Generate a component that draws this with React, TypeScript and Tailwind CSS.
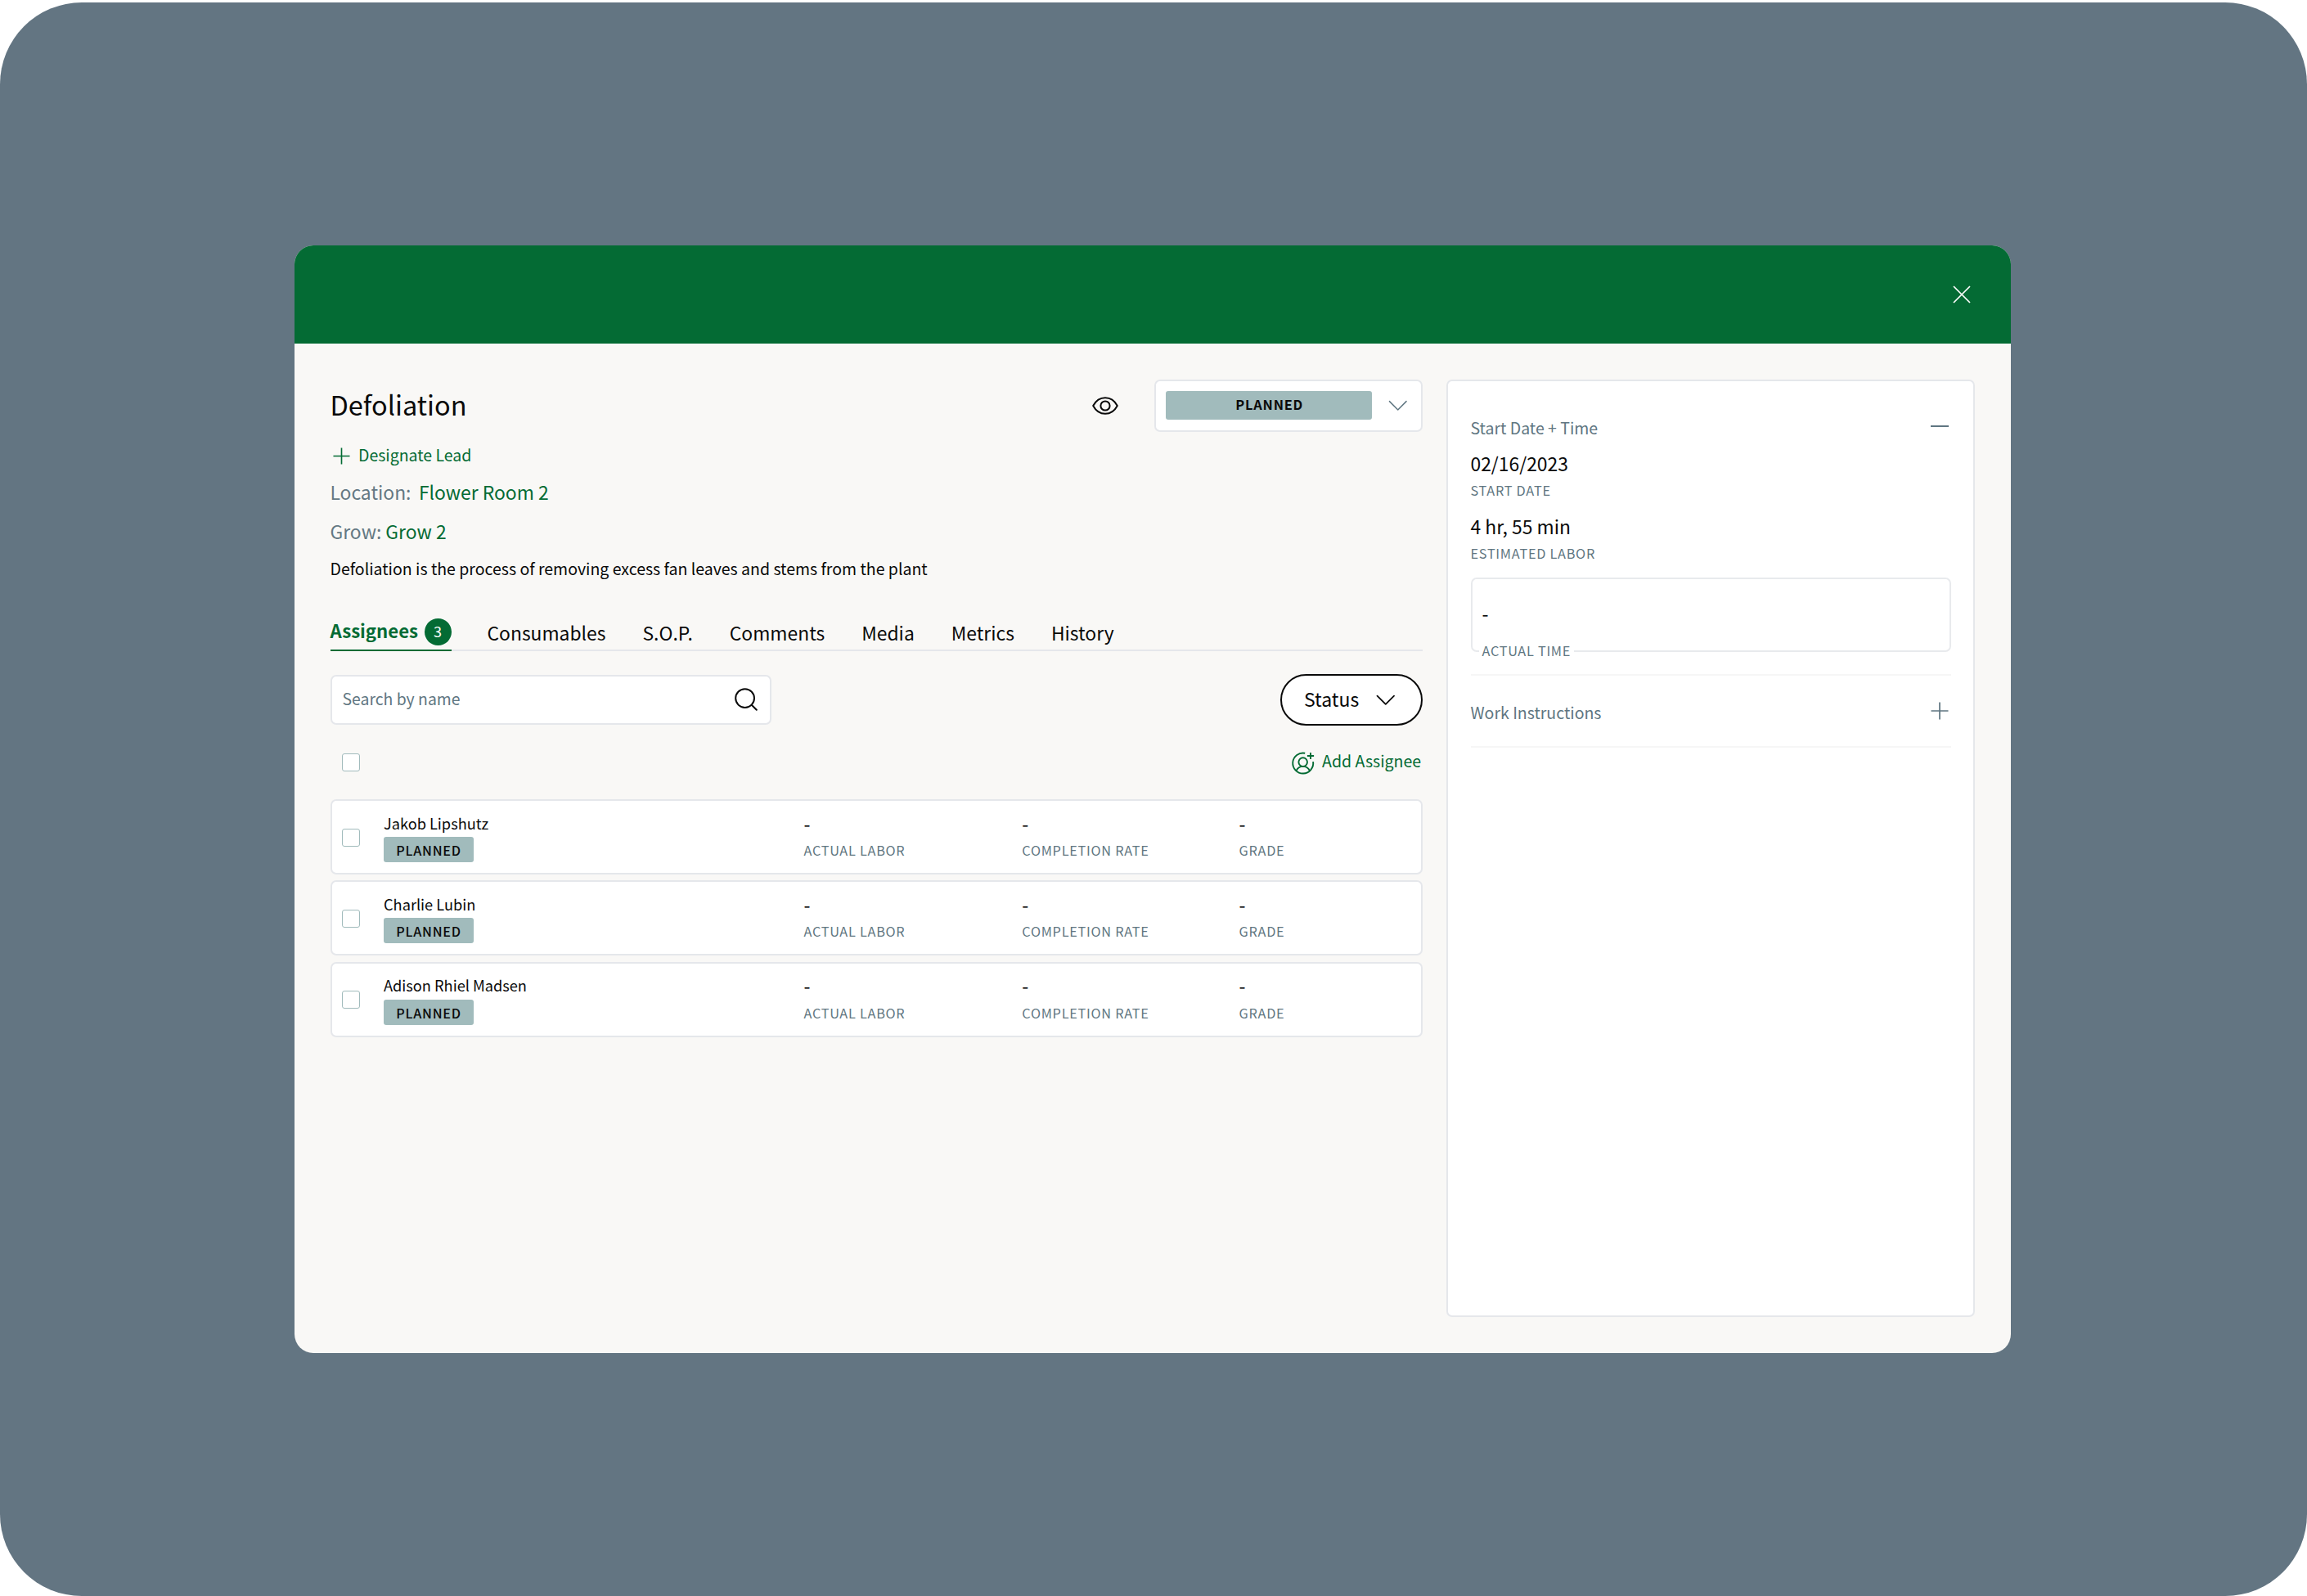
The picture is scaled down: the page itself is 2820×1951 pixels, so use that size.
import type { ReactNode } from "react";

const assignees = ["Jakob Lipshutz", "Charlie Lubin", "Adison Rhiel Madsen"];
const tabs = ["Consumables", "S.O.P.", "Comments", "Media", "Metrics", "History"];
const stats = ["ACTUAL LABOR", "COMPLETION RATE", "GRADE"];

function Plus({ className }: { className: string }) {
  return (
    <svg viewBox="0 0 22 22" className={className} fill="none" stroke="currentColor" strokeWidth="1.7">
      <path d="M11 0.5V21.5M0.5 11H21.5" />
    </svg>
  );
}

function Chevron({ className }: { className: string }) {
  return (
    <svg viewBox="0 0 24 14" className={className} fill="none" stroke="currentColor" strokeLinecap="round" strokeLinejoin="round">
      <path d="M1.5 1.5L12 12L22.5 1.5" />
    </svg>
  );
}

function EyeIcon() {
  return (
    <svg viewBox="0 0 32 22" className="h-[22px] w-8" fill="none" stroke="currentColor" strokeWidth="2">
      <path d="M1.2 11C4.5 4.8 10 1.2 16 1.2S27.5 4.8 30.8 11C27.5 17.2 22 20.8 16 20.8S4.5 17.2 1.2 11Z" strokeLinejoin="round" />
      <circle cx="16" cy="11" r="5.6" />
    </svg>
  );
}

function SearchIcon() {
  return (
    <svg viewBox="0 0 28 28" className="size-7" fill="none" stroke="currentColor" strokeWidth="2" strokeLinecap="round">
      <circle cx="12.6" cy="12.6" r="11.4" />
      <path d="M20.8 20.8L26.8 26.8" />
    </svg>
  );
}

function AddUserIcon() {
  return (
    <svg viewBox="0 0 30 30" className="size-[30px]" fill="none" stroke="currentColor" strokeWidth="1.9">
      <path d="M17.2 2.7A12.5 12.5 0 1 0 27.1 13.2" />
      <circle cx="14.7" cy="13.6" r="5.3" />
      <path d="M6.5 24.2C8 20.9 11 18.9 14.7 18.9S21.4 20.9 22.9 24.2" />
      <path d="M24 1.9V10.1M19.9 6H28.1" />
    </svg>
  );
}

function Checkbox() {
  return <span className="block size-[22px] shrink-0 rounded-[3px] border-[1.5px] border-[#a1bbbc] bg-white" />;
}

function Label({ children }: { children: ReactNode }) {
  return <div className="text-[16.3px] leading-6 tracking-[0.72px] whitespace-nowrap text-[#5f7681]">{children}</div>;
}

function AssigneeRow({ name }: { name: string }) {
  return (
    <li className="flex h-[92px] items-start rounded-[7px] border-2 border-[#e5e7eb] bg-white pt-[14.5px] pl-[12.5px]">
      <div className="mt-[19px] mr-[29px]">
        <Checkbox />
      </div>
      <div className="w-[513.5px] shrink-0">
        <div className="text-[18.2px] leading-6">{name}</div>
        <div className="mt-[5.5px] flex h-[31px] w-[110px] items-center justify-center rounded-[3px] bg-[#a1bbbc] pt-px text-[16.2px] font-medium tracking-[0.7px]">
          PLANNED
        </div>
      </div>
      {stats.map((stat) => (
        <div key={stat} className="w-[266.8px] shrink-0 last:-ml-[1.5px] last:w-[200px]">
          <div className="text-[23px] leading-6">-</div>
          <div className="mt-[9.5px]">
            <Label>{stat}</Label>
          </div>
        </div>
      ))}
    </li>
  );
}

function TaskColumn() {
  return (
    <section className="w-[1335px]">
      <div className="flex h-16 items-center">
        <h1 className="pb-1 text-[32.5px] leading-[60px]">Defoliation</h1>
        <div className="mr-11 ml-auto">
          <EyeIcon />
        </div>
        <div className="flex h-16 w-[328px] items-center rounded-[7px] border-2 border-[#e5e7eb] bg-white pl-3">
          <div className="flex h-[35px] w-[252.5px] items-center justify-center rounded-[3px] bg-[#a1bbbc] pb-[3px] pl-0.5 text-[16.4px] font-bold tracking-[0.8px]">
            PLANNED
          </div>
          <Chevron className="ml-5 h-[14px] w-[23.5px] stroke-[1.5] text-[#5f7681]" />
        </div>
      </div>

      <div className="mt-2.5 flex h-9 items-center text-[#046b34]">
        <Plus className="mt-1 ml-[3px] size-[21px]" />
        <span className="ml-[10.5px] text-[19.5px] leading-9">Designate Lead</span>
      </div>
      <div className="mt-[5.5px] flex text-[22.86px] leading-11">
        <span className="text-[#647883]">Location:</span>
        <span className="ml-[9.5px] text-[#046b34]">Flower Room 2</span>
      </div>
      <div className="mt-[3.5px] flex text-[22.86px] leading-11">
        <span className="text-[#647883]">Grow:</span>
        <span className="ml-[5px] text-[#046b34]">Grow 2</span>
      </div>
      <p className="mt-1.5 text-[19.5px] leading-9">
        Defoliation is the process of removing excess fan leaves and stems from the plant
      </p>

      <nav className="mt-[37.5px] flex h-[46px] gap-[45px] border-b-2 border-[#e5e7eb] text-[22.86px] leading-[46px]">
        <div className="-mr-px -mb-0.5 flex h-[46px] w-[148px] items-center justify-between border-b-2 border-[#046b34] text-[#046b34]">
          <span className="pb-1 text-[22.2px] leading-10 font-bold">Assignees</span>
          <span className="flex size-[33px] items-center justify-center rounded-full bg-[#046b34] pb-[3px] text-[18px] leading-8 text-white">
            3
          </span>
        </div>
        {tabs.map((tab) => (
          <span key={tab}>{tab}</span>
        ))}
      </nav>

      <div className="mt-7 flex h-[62.5px] items-center justify-between">
        <div className="flex h-[61px] w-[539px] items-center justify-between rounded-[7px] border-2 border-[#e5e7eb] bg-white pr-[15px] pl-[13px]">
          <span className="pb-[3px] text-[19.4px] leading-9 text-[#5f7681]">Search by name</span>
          <SearchIcon />
        </div>
        <div className="flex h-[62.5px] w-[174px] items-center rounded-full border-2 border-[#0a0a0a] bg-white pl-[27.5px]">
          <span className="pb-[3px] text-[23px] leading-10">Status</span>
          <Chevron className="mt-0.5 ml-[21px] h-[14px] w-[23.5px] stroke-[1.8]" />
        </div>
      </div>

      <div className="mt-[30px] flex h-8 items-center justify-between pl-[14.5px]">
        <div className="pb-px">
          <Checkbox />
        </div>
        <div className="flex items-center text-[#046b34]">
          <AddUserIcon />
          <span className="mr-[1.5px] ml-2 pb-[5px] text-[19.5px] leading-9">Add Assignee</span>
        </div>
      </div>

      <ul className="mt-[28.5px] flex flex-col gap-[7.4px]">
        {assignees.map((name) => (
          <AssigneeRow key={name} name={name} />
        ))}
      </ul>
    </section>
  );
}

function DetailsPanel() {
  return (
    <aside className="ml-[29.5px] h-[1146.5px] w-[645.5px] rounded-[7px] border-2 border-[#e5e7eb] bg-white pt-[38.5px] pr-[27px] pl-[27.5px]">
      <div className="flex h-9 items-center justify-between text-[#5f7681]">
        <span className="pt-0.5 text-[19.5px] leading-9">Start Date + Time</span>
        <span className="mr-[3px] mb-0.5 h-[2px] w-[22px] bg-[#5f7681]" />
      </div>
      <div className="mt-[7.5px] text-[22.86px] leading-9">02/16/2023</div>
      <div className="mt-[3px]">
        <Label>START DATE</Label>
      </div>
      <div className="mt-[14px] text-[22.86px] leading-9">4 hr, 55 min</div>
      <div className="mt-[3px]">
        <Label>ESTIMATED LABOR</Label>
      </div>
      <div className="relative mt-[18.5px] h-[91px] rounded-[7px] border-2 border-[#e8eaed] pt-[22.5px] pl-3">
        <div className="text-[23px] leading-9">-</div>
        <div className="absolute -bottom-3 left-2 bg-white px-1">
          <Label>ACTUAL TIME</Label>
        </div>
      </div>
      <div className="mt-[27px] flex h-[90px] items-center justify-between border-y-2 border-[#f6f6f6] text-[#5f7681]">
        <span className="pt-[3px] text-[19.5px] leading-9">Work Instructions</span>
        <Plus className="mr-[3px] size-[22px]" />
      </div>
    </aside>
  );
}

export default function App() {
  return (
    <div className="h-[1951px] w-[2820px] overflow-hidden bg-white pt-[2.5px] font-['Noto_Sans_CJK_SC','Source_Sans_Pro',sans-serif] text-[#0a0a0a]">
      <div className="h-[1948.5px] rounded-[100px] bg-[#637582] pt-[297.5px] pl-[360px]">
        <main className="h-[1354px] w-[2098px] overflow-hidden rounded-[23px] bg-[#f9f8f6]">
          <header className="flex h-[119.5px] items-center justify-end bg-[#046b34] pr-[49px] text-white">
            <svg viewBox="0 0 22 22" className="size-[22px]" fill="none" stroke="currentColor" strokeWidth="1.7">
              <path d="M1 1L21 21M21 1L1 21" />
            </svg>
          </header>
          <div className="flex pt-11 pl-[43.5px]">
            <TaskColumn />
            <DetailsPanel />
          </div>
        </main>
      </div>
    </div>
  );
}
